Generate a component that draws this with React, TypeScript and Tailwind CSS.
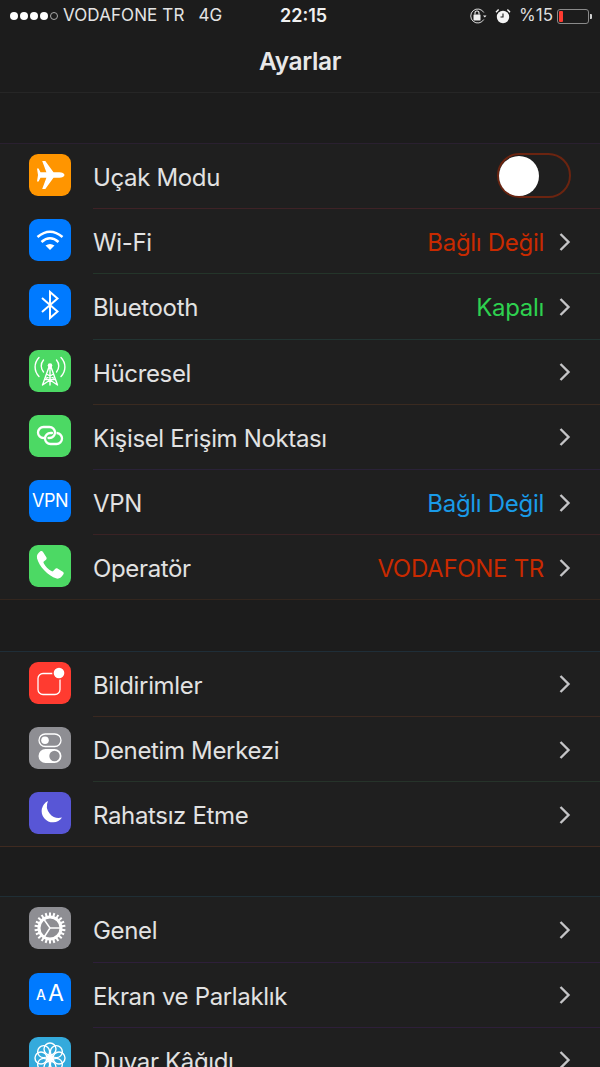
import React from "react";

const Tile = ({ bg, children }: { bg: string; children: React.ReactNode }) => (
  <div className={`w-[42px] h-[42px] rounded-[9px] flex items-center justify-center shrink-0 overflow-hidden ${bg}`}>{children}</div>
);

const Icon = ({ children, ...p }: React.SVGProps<SVGSVGElement>) => (
  <svg width="42" height="42" viewBox="0 0 42 42" fill="none" {...p}>
    {children}
  </svg>
);

const Plane = () => (
  <Icon fill="#fff">
    <path d="M35.500 21c0-1.500-2.500-2.700-5-2.700h-6L16.300 7h-3.100l4.200 11.300h-5.900L9.600 14.500H8L9 21l-1 6.500h1.600l1.900-3.800h5.900L13.200 35h3.100l8.200-11.300h6c2.500 0 5-1.200 5-2.700z" />
  </Icon>
);
const Wifi = () => (
  <Icon stroke="#fff" strokeWidth="2.600">
    <path d="M8.500 18Q21 7.500 33.500 18" />
    <path d="M12.500 23Q21 15.500 29.500 23" />
    <path d="M21 31l-4.500-4.500Q21 23.500 25.500 26.500z" fill="#fff" stroke="none" />
  </Icon>
);
const Bt = () => (
  <Icon stroke="#fff" strokeWidth="2">
    <path d="M13 14l15.500 13.500-7.500 6.500V8l7.500 6.500L13 28" />
  </Icon>
);
const Cell = () => (
  <Icon stroke="#fff" strokeWidth="1.400" strokeLinecap="round" strokeLinejoin="round">
    <circle cx="21" cy="15.500" r="2.300" fill="#fff" stroke="none" />
    <path d="M21 17v18M13.500 35l6.500-18M28.500 35l-6.500-18M15.500 29.500h11M17.500 24l7 4M24.500 24l-7 4M13.500 35l7.500-5 7.500 5" />
    <path d="M14.500 10c-3 3.500-3 8.500 0 12M27.500 10c3 3.500 3 8.500 0 12" />
    <path d="M10 7.500c-5.200 5.500-5.200 13.500 0 19M32 7.500c5.200 5.500 5.200 13.500 0 19" />
  </Icon>
);
const Link = () => (
  <Icon stroke="#fff" strokeWidth="2.300" strokeLinecap="round">
    <path d="M14.500 23a5.500 5.500 0 0 1 0-11h6a5.500 5.500 0 0 1 0 11h-1" />
    <path d="M28 18h-.5a5.500 5.500 0 0 1 0 11h-6a5.500 5.500 0 0 1 0-11h1.500" />
  </Icon>
);
const Phone = () => (
  <svg width="36" height="36" viewBox="0 0 30 30" fill="#fff" className="-translate-x-[1px]">
    <path d="M7.800 2.800c.8-.5 1.700-.3 2.200.5l2.800 4.500c.4.700.3 1.500-.3 2l-1.800 1.500c-.4.300-.4.700-.2 1.100 1.500 3 3.800 5.400 6.900 7 .4.200.8.100 1.100-.2l1.600-1.800c.5-.6 1.300-.7 2-.3l4.400 2.600c.8.500 1 1.500.5 2.200-1.400 2.300-3.300 4-5.600 3.600C13.800 22.800 6.800 15.400 5 8.500c-.5-2.300.8-4.300 2.800-5.700z" />
  </svg>
);
const Notif = () => (
  <Icon>
    <rect x="9" y="11.500" width="22" height="21" rx="5" stroke="#fff" strokeWidth="1.300" />
    <circle cx="30" cy="11" r="6.800" fill="#ff3b30" />
    <circle cx="30" cy="11" r="5.300" fill="#fff" />
  </Icon>
);
const Control = () => (
  <Icon>
    <rect x="10" y="7" width="22" height="12.500" rx="6.250" stroke="#fff" strokeWidth="1.300" />
    <circle cx="16" cy="13.200" r="3.800" fill="#fff" />
    <rect x="9.500" y="22" width="23" height="14" rx="7" fill="#fff" />
    <circle cx="25.500" cy="29" r="5.200" fill="#8e8e93" />
  </Icon>
);
const Moon = () => (
  <Icon fill="#fff">
    <path d="M19 9a11.200 11.200 0 1 0 14 16.500A12 12 0 0 1 19 9z" />
  </Icon>
);
const Gear = () => {
  const teeth = Array.from({ length: 22 }, (_, i) => (i * 360) / 22);
  return (
    <Icon stroke="#fff">
      <circle cx="21" cy="21" r="11" strokeWidth="3" />
      {teeth.map((a) => (
        <rect key={a} x="20" y="5.500" width="2" height="4" fill="#fff" stroke="none" transform={`rotate(${a} 21 21)`} />
      ))}
      <path d="M21 21H31M21 21l-6 -8.500M21 21l-5.500 8.500" strokeWidth="1.500" />
    </Icon>
  );
};
const Flower = () => (
  <Icon stroke="#fff" strokeWidth="1.400">
    {[0, 45, 90, 135, 180, 225, 270, 315].map((a) => (
      <circle key={a} cx="21" cy="12" r="6" transform={`rotate(${a} 21 21)`} />
    ))}
    <circle cx="21" cy="21" r="2.500" fill="#fff" />
  </Icon>
);

type Row = { icon: React.ReactNode; bg: string; label: string; value?: string; valueClass?: string; line: string; toggle?: boolean };

const sections: { cls: string; rows: Row[] }[] = [
  {
    cls: "border-t-[#2a2030] border-b-[#33261e]",
    rows: [
      { icon: <Plane />, bg: "bg-[#ff9500]", label: "Uçak Modu", toggle: true, line: "border-[#3f2226]" },
      { icon: <Wifi />, bg: "bg-[#007aff]", label: "Wi-Fi", value: "Bağlı Değil", valueClass: "text-[#c92a00]", line: "border-[#24352a]" },
      { icon: <Bt />, bg: "bg-[#007aff]", label: "Bluetooth", value: "Kapalı", valueClass: "text-[#2ed14f]", line: "border-[#223432]" },
      { icon: <Cell />, bg: "bg-[#4cd964]", label: "Hücresel", line: "border-[#3a2a20]" },
      { icon: <Link />, bg: "bg-[#4cd964]", label: "Kişisel Erişim Noktası", line: "border-[#2a2238]" },
      { icon: <span className="text-white text-[18px] leading-none tracking-[-0.5px]">VPN</span>, bg: "bg-[#007aff]", label: "VPN", value: "Bağlı Değil", valueClass: "text-[#1a9be8]", line: "border-[#3a2224]" },
      { icon: <Phone />, bg: "bg-[#4cd964]", label: "Operatör", value: "VODAFONE TR", valueClass: "text-[#c92a00]", line: "" },
    ],
  },
  {
    cls: "mt-[50.500px] border-t-[#1f2e38] border-b-[#3f2a20]",
    rows: [
      { icon: <Notif />, bg: "bg-[#ff3b30]", label: "Bildirimler", line: "border-[#3a2820]" },
      { icon: <Control />, bg: "bg-[#8e8e93]", label: "Denetim Merkezi", line: "border-[#26332a]" },
      { icon: <Moon />, bg: "bg-[#5856d6]", label: "Rahatsız Etme", line: "" },
    ],
  },
  {
    cls: "mt-[49px] border-t-[#1f2e35] border-b-[#2e1f3a]",
    rows: [
      { icon: <Gear />, bg: "bg-[#8e8e93]", label: "Genel", line: "border-[#2e1f3a]" },
      {
        icon: (
          <span className="text-white leading-none flex items-end gap-[2px]">
            <span className="text-[14px] font-medium mb-[3px]">A</span>
            <span className="text-[23px]">A</span>
          </span>
        ),
        bg: "bg-[#007aff]",
        label: "Ekran ve Parlaklık",
        line: "border-[#2e1f3a]",
      },
      { icon: <Flower />, bg: "bg-[#34aadc]", label: "Duvar Kâğıdı", line: "" },
    ],
  },
];

const Chevron = () => (
  <svg width="12" height="20" viewBox="0 0 12 20" fill="none" stroke="#c4c4c6" strokeWidth="2.400" className="shrink-0 mb-[2px]">
    <path d="M1.500 2l8 8-8 8" />
  </svg>
);

const SettingsRow = ({ row, last }: { row: Row; last: boolean }) => (
  <div className={`flex pl-[29px] bg-[#1f1f1f] ${last ? "h-[64.200px]" : "h-[65.200px]"}`}>
    <div className="flex items-center pr-[22px] pb-[3px]">
      <Tile bg={row.bg}>{row.icon}</Tile>
    </div>
    <div className={`flex-1 flex items-center pr-[29px] pt-[3px] ${last ? "" : `border-b ${row.line}`}`}>
      <span className="flex-1 text-[24px] text-[#e2e2e2] tracking-[-0.35px] pt-[1px]">{row.label}</span>
      {row.value && <span className={`text-[24px] tracking-[-0.3px] mr-[15px] pt-[1px] ${row.valueClass}`}>{row.value}</span>}
      {row.toggle ? (
        <div className="relative w-[74px] h-[45px] rounded-full border-2 border-[#6b2410] mb-[4px]">
          <div className="absolute left-0 top-[1px] w-[40px] h-[40px] rounded-full bg-white" />
        </div>
      ) : (
        <Chevron />
      )}
    </div>
  </div>
);

export default function App() {
  return (
    <div className="w-[600px] h-[1067px] overflow-hidden bg-[#1c1c1c] font-['Inter',sans-serif]">
      <header className="h-[93px] border-b border-[#262626] flex flex-col">
        <div className="h-[32px] flex items-center pl-[10px] pr-[8px] text-[#e8e8e8] text-[17px]">
          <div className="flex items-center gap-[2px]">
            {[0, 1, 2, 3].map((i) => (
              <span key={i} className="w-[8px] h-[8px] rounded-full bg-white" />
            ))}
            <span className="w-[8px] h-[8px] rounded-full border border-[#aaa]" />
          </div>
          <span className="ml-[5px] tracking-[0.1px] text-[#e4e4e4]">VODAFONE TR</span>
          <span className="ml-[14px] text-[#e4e4e4]">4G</span>
          <span className="flex-1 text-center text-[18px] font-semibold text-[#f0f0f0] -ml-[84px] pb-[2px]">22:15</span>
          <div className="flex items-center">
            <svg width="18" height="18" viewBox="0 0 18 18" fill="none" stroke="#eee" strokeWidth="0.900">
              <path d="M14.800 5.500A7 7 0 1 0 14.800 12.500" />
              <path d="M14 8.500h3.500l-1.700 2z" fill="#eee" stroke="none" />
              <rect x="4.500" y="7.500" width="7" height="6" fill="#eee" stroke="none" rx="0.500" />
              <path d="M6 7.500V6a2 2 0 0 1 4 0v1.500" strokeWidth="1.100" />
            </svg>
            <svg width="16" height="16" viewBox="0 0 16 16" className="ml-[8px]" fill="#f4f4f4">
              <circle cx="8" cy="9" r="6.200" />
              <path d="M8 5.500V9H5.500" stroke="#1c1c1c" strokeWidth="1.100" fill="none" />
              <path d="M1 4.300 3.600 1.500M15 4.300 12.400 1.500" stroke="#f4f4f4" strokeWidth="1.400" />
            </svg>
            <span className="ml-[8px] text-[#dedede]">%15</span>
            <div className="ml-[4px] flex items-center">
              <div className="w-[32px] h-[15px] rounded-[3px] border border-[#8a8a8a] p-[1px]">
                <div className="w-[4px] h-full bg-[#ff3b30] rounded-[1px]" />
              </div>
              <div className="w-[2px] h-[5px] ml-[1px] bg-[#cfcfcf] rounded-r-[1px]" />
            </div>
          </div>
        </div>
        <div className="flex-1 flex items-center justify-center pb-[2px] text-[24.500px] font-semibold text-[#e8e8e8] tracking-[-0.4px]">
          Ayarlar
        </div>
      </header>
      <main className="pt-[50px]">
        {sections.map((s, i) => (
          <section key={i} className={`border-t border-b ${s.cls}`}>
            {s.rows.map((r, j) => (
              <SettingsRow key={r.label} row={r} last={j === s.rows.length - 1} />
            ))}
          </section>
        ))}
      </main>
    </div>
  );
}
